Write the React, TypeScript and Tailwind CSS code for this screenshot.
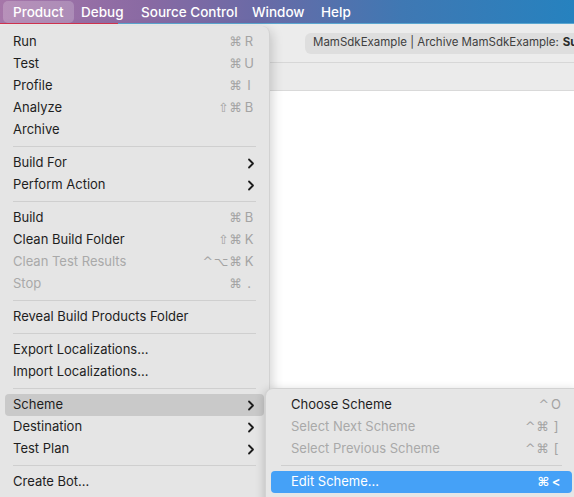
import React from "react";

const font = { fontFamily: "Inter, 'Noto Sans', 'DejaVu Sans', sans-serif" };

type Item =
  | { sep: true }
  | { label: string; keys?: string; k?: string; disabled?: boolean; sub?: boolean; hl?: boolean };

const main: Item[] = [
  { label: "Run", keys: "⌘", k: "R" },
  { label: "Test", keys: "⌘", k: "U" },
  { label: "Profile", keys: "⌘", k: "I" },
  { label: "Analyze", keys: "⇧⌘", k: "B" },
  { label: "Archive" },
  { sep: true },
  { label: "Build For", sub: true },
  { label: "Perform Action", sub: true },
  { sep: true },
  { label: "Build", keys: "⌘", k: "B" },
  { label: "Clean Build Folder", keys: "⇧⌘", k: "K" },
  { label: "Clean Test Results", keys: "^⌥⌘", k: "K", disabled: true },
  { label: "Stop", keys: "⌘", k: ".", disabled: true },
  { sep: true },
  { label: "Reveal Build Products Folder" },
  { sep: true },
  { label: "Export Localizations..." },
  { label: "Import Localizations..." },
  { sep: true },
  { label: "Scheme", sub: true, hl: true },
  { label: "Destination", sub: true },
  { label: "Test Plan", sub: true },
  { sep: true },
  { label: "Create Bot..." },
];

const subItems: Item[] = [
  { label: "Choose Scheme", keys: "^", k: "O" },
  { label: "Select Next Scheme", keys: "^⌘", k: "]", disabled: true },
  { label: "Select Previous Scheme", keys: "^⌘", k: "[", disabled: true },
  { sep: true },
  { label: "Edit Scheme...", keys: "⌘", k: "<", hl: true },
];

function Chevron() {
  return (
    <svg width="8" height="11" viewBox="0 0 8 11" className="text-[#1d1d1d]">
      <path d="M2 1.5 L6 5.5 L2 9.5" fill="none" stroke="currentColor" strokeWidth="1.8" strokeLinecap="round" strokeLinejoin="round" />
    </svg>
  );
}

function Row({ it, blue, pl, pr }: { it: Item; blue?: boolean; pl: string; pr: string }) {
  if ("sep" in it) {
    return (
      <div className="h-[11px] flex items-center px-[8px]">
        <div className="h-px w-full bg-[#cfcfcf]" />
      </div>
    );
  }
  const hlBg = it.hl ? (blue ? "bg-[#45a1f7] text-white" : "bg-[#c9c9c9]") : "";
  const txt = it.hl && blue ? "text-white" : it.disabled ? "text-[#a9a9a9]" : "text-[#1e1e1e]";
  const kc = it.hl && blue ? "text-white font-semibold" : "text-[#a3a3a3]";
  return (
    <div className={`h-[22px] flex items-center rounded-[4px] ${pl} ${pr} ${hlBg}`}>
      <span className={`flex-1 text-[13px] ${txt}`}>{it.label}</span>
      {it.keys && (
        <span className={`flex items-center text-[13px] ${kc}`} style={{ fontFamily: "'DejaVu Sans', Inter, sans-serif" }}>
          <span className="text-[12.5px] tracking-[1px]">{it.keys}</span>
          <span className="w-[12px] text-center text-[13px]" style={font}>{it.k}</span>
        </span>
      )}
      {it.sub && <Chevron />}
    </div>
  );
}

export default function App() {
  return (
    <div className="relative w-[574px] h-[497px] overflow-hidden bg-white" style={font}>
      {/* menu bar */}
      <div className="relative h-[24px] flex items-center bg-[linear-gradient(90deg,#a676a9_0%,#8a6aa3_25%,#6a6aa6_45%,#3f78b3_70%,#2682bf_100%)]">
        <div className="flex items-center h-full text-white text-[13.5px] font-medium whitespace-nowrap">
          <div className="ml-[3px] w-[71px] h-[22px] pl-[10px] rounded-[5px] bg-white/20 flex items-center">Product</div>
          <div className="w-[60px] pl-[7px]">Debug</div>
          <div className="w-[111px] pl-[7px]">Source Control</div>
          <div className="w-[69px] pl-[7px]">Window</div>
          <div className="pl-[7px]">Help</div>
        </div>
        <div className="absolute left-0 bottom-0 h-px w-[118px] bg-[#d2334f]" />
        <div className="absolute left-[118px] bottom-0 h-px right-0 bg-[#5aa6d0]" />
      </div>

      {/* window */}
      <div className="flex flex-col">
        <div className="h-[39px] bg-[#ececec] border-b border-[#d7d7d7] flex items-center pl-[305px]">
          <div className="h-[21px] flex-1 rounded-l-[6px] bg-[#dedede] flex items-center pl-[8px] text-[11.5px] text-[#404040] whitespace-nowrap overflow-hidden">
            MamSdkExample | Archive MamSdkExample:<span className="font-bold ml-[4px] text-[#2a2a2a]">Succ</span>
          </div>
        </div>
        <div className="h-[28px] bg-[#ebebeb] border-b border-[#d9d9d9]" />
        <div className="flex-1 bg-white" />
      </div>

      {/* main menu */}
      <div className="absolute left-0 top-[26px] w-[270px] h-[480px] bg-[#e5e5e5] rounded-tr-[8px] rounded-br-[8px] shadow-[2px_4px_12px_rgba(0,0,0,0.18)] border-r border-[#d2d2d2] pt-[5px] px-[5px]">
        {main.map((it, i) => (
          <Row key={i} it={it} pl="pl-[8px]" pr="pr-[9px]" />
        ))}
      </div>

      {/* submenu */}
      <div className="absolute left-[265px] top-[388px] w-[312px] h-[120px] bg-[#e6e6e6] rounded-tl-[8px] rounded-bl-[8px] shadow-[-1px_2px_10px_rgba(0,0,0,0.18)] border-l border-t border-[#d2d2d2] pt-[5px] px-[5px]">
        {subItems.map((it, i) =>
          "sep" in it ? (
            <div key={i} className="h-[11px] flex items-center pl-[10px] pr-[10px]">
              <div className="h-px w-full bg-[#cfcfcf]" />
            </div>
          ) : (
            <Row key={i} it={it} blue pl="pl-[20px]" pr="pr-[10px]" />
          )
        )}
      </div>
    </div>
  );
}
